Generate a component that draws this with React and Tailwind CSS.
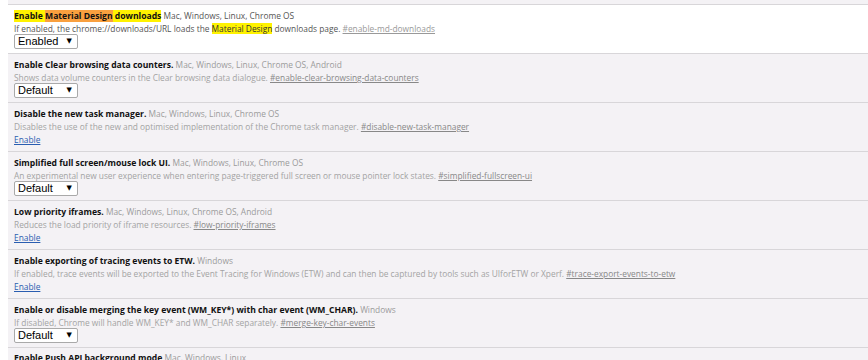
import React from "react";

const font = { fontFamily: '"Open Sans", "Noto Sans", sans-serif' };

function Select({ value }) {
  return (
    <div className="flex h-[15px] w-[64px] items-center justify-between rounded-[2px] border border-[#a9a9a9] bg-white pl-[3px] pr-[5px]">
      <span className="text-[11px] leading-none text-black" style={{ fontFamily: '"Liberation Sans", Arial, sans-serif' }}>{value}</span>
      <span className="text-[7px] leading-none text-black" style={{ fontFamily: '"DejaVu Sans", sans-serif' }}>▼</span>
    </div>
  );
}

function EnableLink() {
  return (
    <div className="h-[15px] pt-[2px] text-[8.4px] leading-[12px]">
      <a className="text-[#2a5db0] underline">Enable</a>
    </div>
  );
}

function Row({ title, platforms, desc, link, control, first }) {
  return (
    <div className={`ml-2 border-b border-[#d8d6d9] pl-[6px] pb-[4px] pt-[5px] ${first ? "bg-white" : "bg-[#f4f2f5]"}`}>
      <div className="h-[12px] whitespace-nowrap text-[8.4px] leading-[12px]">
        <span className="text-[8.6px] font-bold text-[#111]">{title}</span>{" "}
        <span className={first ? "text-[#555]" : "text-[#9b9b9b]"}>{platforms}</span>
      </div>
      <div className={`h-[12px] whitespace-nowrap text-[8.35px] leading-[13px] ${first ? "text-[#555]" : "text-[#a3a3a3]"}`}>
        {desc} <a className={`underline ${first ? "text-[#999]" : "text-[#888]"}`}>{link}</a>
      </div>
      {control === "link" ? <EnableLink /> : <Select value={control} />}
    </div>
  );
}

export default function App() {
  const rows = [
    {
      title: "Enable Clear browsing data counters.",
      platforms: "Mac, Windows, Linux, Chrome OS, Android",
      desc: "Shows data volume counters in the Clear browsing data dialogue.",
      link: "#enable-clear-browsing-data-counters",
      control: "Default",
    },
    {
      title: "Disable the new task manager.",
      platforms: "Mac, Windows, Linux, Chrome OS",
      desc: "Disables the use of the new and optimised implementation of the Chrome task manager.",
      link: "#disable-new-task-manager",
      control: "link",
    },
    {
      title: "Simplified full screen/mouse lock UI.",
      platforms: "Mac, Windows, Linux, Chrome OS",
      desc: "An experimental new user experience when entering page-triggered full screen or mouse pointer lock states.",
      link: "#simplified-fullscreen-ui",
      control: "Default",
    },
    {
      title: "Low priority iframes.",
      platforms: "Mac, Windows, Linux, Chrome OS, Android",
      desc: "Reduces the load priority of iframe resources.",
      link: "#low-priority-iframes",
      control: "link",
    },
    {
      title: "Enable exporting of tracing events to ETW.",
      platforms: "Windows",
      desc: "If enabled, trace events will be exported to the Event Tracing for Windows (ETW) and can then be captured by tools such as UIforETW or Xperf.",
      link: "#trace-export-events-to-etw",
      control: "link",
    },
    {
      title: "Enable or disable merging the key event (WM_KEY*) with char event (WM_CHAR).",
      platforms: "Windows",
      desc: "If disabled, Chrome will handle WM_KEY* and WM_CHAR separately.",
      link: "#merge-key-char-events",
      control: "Default",
    },
  ];

  return (
    <div className="h-[360px] w-[868px] overflow-hidden bg-white" style={font}>
      <div className="ml-2 h-[5px] border-b border-[#d8d6d9] bg-[#f4f2f5]" />
      <Row
        first
        title={
          <>
            <span className="bg-[#fff200]">Enable </span>
            <span className="bg-[#f9a03f]">Material Design</span>
            <span className="bg-[#fff200]"> downloads</span>
          </>
        }
        platforms="Mac, Windows, Linux, Chrome OS"
        desc={
          <>
            If enabled, the chrome://downloads/URL loads the <span className="bg-[#fff200] text-[#333]">Material Design</span> downloads page.
          </>
        }
        link="#enable-md-downloads"
        control="Enabled"
      />
      {rows.map((r, i) => (
        <Row key={i} {...r} />
      ))}
      <div className="ml-2 h-[20px] bg-[#f4f2f5] pl-[6px] pt-[4px]">
        <div className="whitespace-nowrap text-[8.4px] leading-[12px]">
          <span className="text-[8.6px] font-bold text-[#111]">Enable Push API background mode</span>{" "}
          <span className="text-[#9b9b9b]">Mac, Windows, Linux</span>
        </div>
      </div>
    </div>
  );
}
